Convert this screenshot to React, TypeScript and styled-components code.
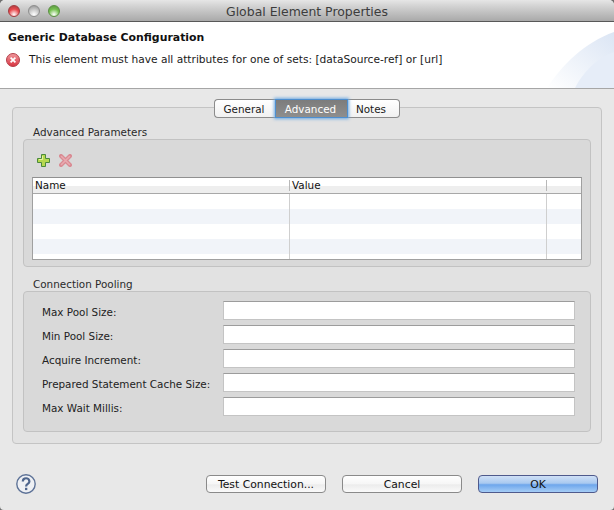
import React from "react";
import styled, { createGlobalStyle } from "styled-components";

const Global = createGlobalStyle`
  html, body { margin: 0; padding: 0; background: #6f6f6f; }
  * { box-sizing: border-box; }
`;

const Win = styled.div`
  width: 614px;
  height: 510px;
  display: flex;
  flex-direction: column;
  background: #e8e8e8;
  border-radius: 5px 5px 4px 4px;
  overflow: hidden;
  font-family: "DejaVu Sans", sans-serif;
  font-size: 10.4px;
  color: #1a1a1a;
`;

const TitleBar = styled.div`
  height: 22px;
  flex: none;
  display: flex;
  align-items: center;
  position: relative;
  padding-left: 8px;
  gap: 8px;
  background: linear-gradient(#e6e6e6, #d2d2d2 30%, #a9a9a9);
  border-bottom: 1px solid #585858;
`;

const Light = styled.span<{ $c: string; $d: string }>`
  width: 12px;
  height: 12px;
  border-radius: 50%;
  border: 1px solid ${(p) => p.$d};
  background: radial-gradient(circle at 50% 85%, #fff 0, ${(p) => p.$c} 55%, ${(p) => p.$d} 100%);
`;

const Title = styled.div`
  position: absolute;
  left: 0;
  right: 0;
  top: 4px;
  line-height: 16px;
  text-align: center;
  font-size: 12.45px;
  color: #3c3c3c;
`;

const Header = styled.div`
  height: 67px;
  flex: none;
  position: relative;
  background: #fff;
  border-bottom: 1px solid #a6a6a6;
  padding: 8px 8px 0;
  overflow: hidden;
`;

const Banner = styled.svg`
  position: absolute;
  right: 0;
  top: 0;
`;

const Heading = styled.div`
  font-weight: bold;
  font-size: 10.9px;
  line-height: 15px;
  color: #111;
  position: relative;
`;

const Message = styled.div`
  display: flex;
  align-items: flex-start;
  gap: 9px;
  margin-top: 7px;
  margin-left: -2px;
  line-height: 16px;
  font-size: 10.63px;
  position: relative;
`;

const MessageIcon = styled.svg`
  flex: none;
  margin-top: 1px;
`;

const Body = styled.div`
  flex: 1;
  display: flex;
  flex-direction: column;
  padding: 10px 12px 0;
`;

const TabBar = styled.div`
  height: 19px;
  display: flex;
  justify-content: center;
  margin-bottom: -11px;
  position: relative;
  z-index: 1;
`;

const Tab = styled.div<{ $active?: boolean; $w: number; $pos: "l" | "m" | "r" }>`
  width: ${(p) => p.$w}px;
  height: 19px;
  display: flex;
  align-items: center;
  justify-content: center;
  padding-right: ${(p) => (p.$pos === "r" ? 5 : 2)}px;
  background: ${(p) => (p.$active ? "linear-gradient(#7c7c7c, #8e8e8e)" : "linear-gradient(#fff, #f1f1f1)")};
  color: ${(p) => (p.$active ? "#fff" : "#1a1a1a")};
  border: 1px solid ${(p) => (p.$active ? "#4d8fd0" : "#8b8b8b")};
  border-left-width: ${(p) => (p.$pos === "r" ? 0 : 1)}px;
  border-right-width: ${(p) => (p.$pos === "l" ? 0 : 1)}px;
  border-radius: ${(p) => (p.$pos === "l" ? "4px 0 0 4px" : p.$pos === "r" ? "0 4px 4px 0" : "0")};
  box-shadow: ${(p) => (p.$active ? "0 0 3px 1px #6fa9e0" : "none")};
  z-index: ${(p) => (p.$active ? 1 : 0)};
`;

const Folder = styled.div`
  height: 337px;
  flex: none;
  background: #e2e2e2;
  border: 1px solid #c4c4c4;
  border-radius: 4px;
  padding: 17px 10px 0;
`;

const GroupLabel = styled.div<{ $top: number }>`
  margin: ${(p) => p.$top}px 0 0 10px;
  height: 13px;
  padding-top: 1px;
  line-height: 12px;
  color: #2a2a2a;
`;

const Group = styled.div<{ $h: number }>`
  height: ${(p) => p.$h}px;
  margin-top: 1px;
  background: #d9d9d9;
  border: 1px solid #c2c2c2;
  border-radius: 4px;
`;

const Tools = styled.div`
  display: flex;
  gap: 9px;
  padding: 14px 0 0 13px;
  height: 37px;
`;

const Table = styled.div`
  margin: 0 8px;
  height: 83px;
  background: #fff;
  border: 1px solid #a0a0a0;
  border-top-color: #909090;
  overflow: hidden;
`;

const HeaderRow = styled.div`
  display: grid;
  grid-template-columns: 257px 257px 1fr;
  height: 16px;
  background: linear-gradient(#fff 0, #fff 50%, #eeeeee 55%, #eeeeee 100%);
  border-bottom: 1px solid #a8a8a8;
  color: #111;
`;

const HeadCell = styled.div<{ $last?: boolean }>`
  padding-left: 2px;
  border-right: ${(p) => (p.$last ? "0" : "1px solid #b8b8b8")};
  margin: 2px 0;
  line-height: 11px;
`;

const Row = styled.div<{ $alt?: boolean; $h: number }>`
  display: grid;
  grid-template-columns: 257px 257px 1fr;
  height: ${(p) => p.$h}px;
  background: ${(p) => (p.$alt ? "#f1f4f9" : "#fff")};
`;

const Cell = styled.div<{ $last?: boolean }>`
  border-right: ${(p) => (p.$last ? "0" : "1px solid #cfcfcf")};
`;

const Form = styled.div`
  display: flex;
  flex-direction: column;
  gap: 5px;
  padding: 9px 0 0 18px;
`;

const Field = styled.div`
  display: flex;
  align-items: center;
  height: 19px;
`;

const Label = styled.label`
  width: 181px;
  flex: none;
  padding-top: 2px;
  color: #222;
`;

const Input = styled.div`
  width: 352px;
  height: 19px;
  background: #fff;
  border: 1px solid #c4c4c4;
  border-top-color: #9c9c9c;
`;

const Footer = styled.div`
  flex: 1;
  display: flex;
  align-items: flex-start;
  padding: 31px 4px 0;
`;

const Help = styled.svg`
  flex: none;
  margin-top: -1px;
  margin-right: 170px;
`;

const Btn = styled.div<{ $primary?: boolean }>`
  width: 120px;
  flex: none;
  height: 18px;
  margin-right: 16px;
  display: flex;
  align-items: center;
  justify-content: center;
  border-radius: 4px;
  color: #111;
  font-size: 10.8px;
  border: 1px solid ${(p) => (p.$primary ? "#4f5a8c" : "#8a8a8a")};
  background: ${(p) =>
    p.$primary
      ? "linear-gradient(#cfe0f6, #a9c9f0 45%, #6ea6ec 55%, #a5cdf6)"
      : "linear-gradient(#fff, #f6f6f6 50%, #ececec 55%, #fafafa)"};
  &:last-child { margin-right: 0; }
`;

const ErrorIcon = () => (
  <MessageIcon width="14" height="14" viewBox="0 0 14 14">
    <defs>
      <linearGradient id="er" x1="0" y1="0" x2="0" y2="1">
        <stop offset="0" stopColor="#f09a9f" />
        <stop offset="1" stopColor="#d8323f" />
      </linearGradient>
    </defs>
    <circle cx="7" cy="7" r="6.5" fill="url(#er)" stroke="#b3404a" />
    <path d="M4.6 4.6l4.8 4.8M9.4 4.6l-4.8 4.8" stroke="#fff" strokeWidth="1.7" />
  </MessageIcon>
);

const AddIcon = () => (
  <svg width="13" height="13" viewBox="0 0 13 13">
    <path d="M4.5 .5h4v4h4v4h-4v4h-4v-4h-4v-4h4z" fill="#b6d84e" stroke="#4b8a3c" />
    <path d="M5.5 2v3.5H2" stroke="#e8f3a0" fill="none" />
  </svg>
);

const RemoveIcon = () => (
  <svg width="13" height="13" viewBox="0 0 13 13">
    <path d="M2 2l9 9M11 2l-9 9" stroke="#d98a92" strokeWidth="4" strokeLinecap="round" />
    <path d="M2.5 2.5l8 8M10.5 2.5l-8 8" stroke="#e9aab0" strokeWidth="1.6" strokeLinecap="round" />
  </svg>
);

const HelpIcon = () => (
  <Help width="20" height="20" viewBox="0 0 20 20">
    <circle cx="10" cy="10" r="9.2" fill="#eef0f4" stroke="#5d7297" strokeWidth="1.4" />
    <path d="M6.8 7.4c0-4.2 6.6-4.2 6.6 0 0 2.6-3.3 2.4-3.3 5" fill="none" stroke="#4f668d" strokeWidth="2.2" />
    <rect x="9" y="13.8" width="2.3" height="2.3" fill="#4f668d" />
  </Help>
);

const fields = ["Max Pool Size:", "Min Pool Size:", "Acquire Increment:", "Prepared Statement Cache Size:", "Max Wait Millis:"];
const rows = [
  { h: 15, alt: false },
  { h: 15, alt: true },
  { h: 15, alt: false },
  { h: 15, alt: true },
  { h: 6, alt: false },
];

export default function App() {
  return (
    <Win>
      <Global />
      <TitleBar>
        <Light $c="#e8484c" $d="#a23a3e" />
        <Light $c="#c4c4c4" $d="#8e8e8e" />
        <Light $c="#74c04e" $d="#5a8f42" />
        <Title>Global Element Properties</Title>
      </TitleBar>
      <Header>
        <Banner width="75" height="66" viewBox="0 0 75 66">
          <defs>
            <linearGradient id="bn" x1="0" y1="1" x2="1" y2="0">
              <stop offset="0" stopColor="#fff" />
              <stop offset="1" stopColor="#dbe5f4" />
            </linearGradient>
          </defs>
          <path d="M8 66C22 44 46 20 75 10V66z" fill="url(#bn)" />
          <path d="M36 66C44 50 58 36 75 30V66z" fill="#e6edf8" />
        </Banner>
        <Heading>Generic Database Configuration</Heading>
        <Message>
          <ErrorIcon />
          <span>This element must have all attributes for one of sets: [dataSource-ref] or [url]</span>
        </Message>
      </Header>
      <Body>
        <TabBar>
          <Tab $w={61} $pos="l">General</Tab>
          <Tab $w={73} $active $pos="m">Advanced</Tab>
          <Tab $w={52} $pos="r">Notes</Tab>
        </TabBar>
        <Folder>
          <GroupLabel $top={0}>Advanced Parameters</GroupLabel>
          <Group $h={128}>
            <Tools>
              <AddIcon />
              <RemoveIcon />
            </Tools>
            <Table>
              <HeaderRow>
                <HeadCell>Name</HeadCell>
                <HeadCell>Value</HeadCell>
                <HeadCell $last />
              </HeaderRow>
              {rows.map((r, i) => (
                <Row key={i} $alt={r.alt} $h={r.h}>
                  <Cell />
                  <Cell />
                  <Cell $last />
                </Row>
              ))}
            </Table>
          </Group>
          <GroupLabel $top={10}>Connection Pooling</GroupLabel>
          <Group $h={141}>
            <Form>
              {fields.map((f) => (
                <Field key={f}>
                  <Label>{f}</Label>
                  <Input />
                </Field>
              ))}
            </Form>
          </Group>
        </Folder>
        <Footer>
          <HelpIcon />
          <Btn>Test Connection...</Btn>
          <Btn>Cancel</Btn>
          <Btn $primary>OK</Btn>
        </Footer>
      </Body>
    </Win>
  );
}
